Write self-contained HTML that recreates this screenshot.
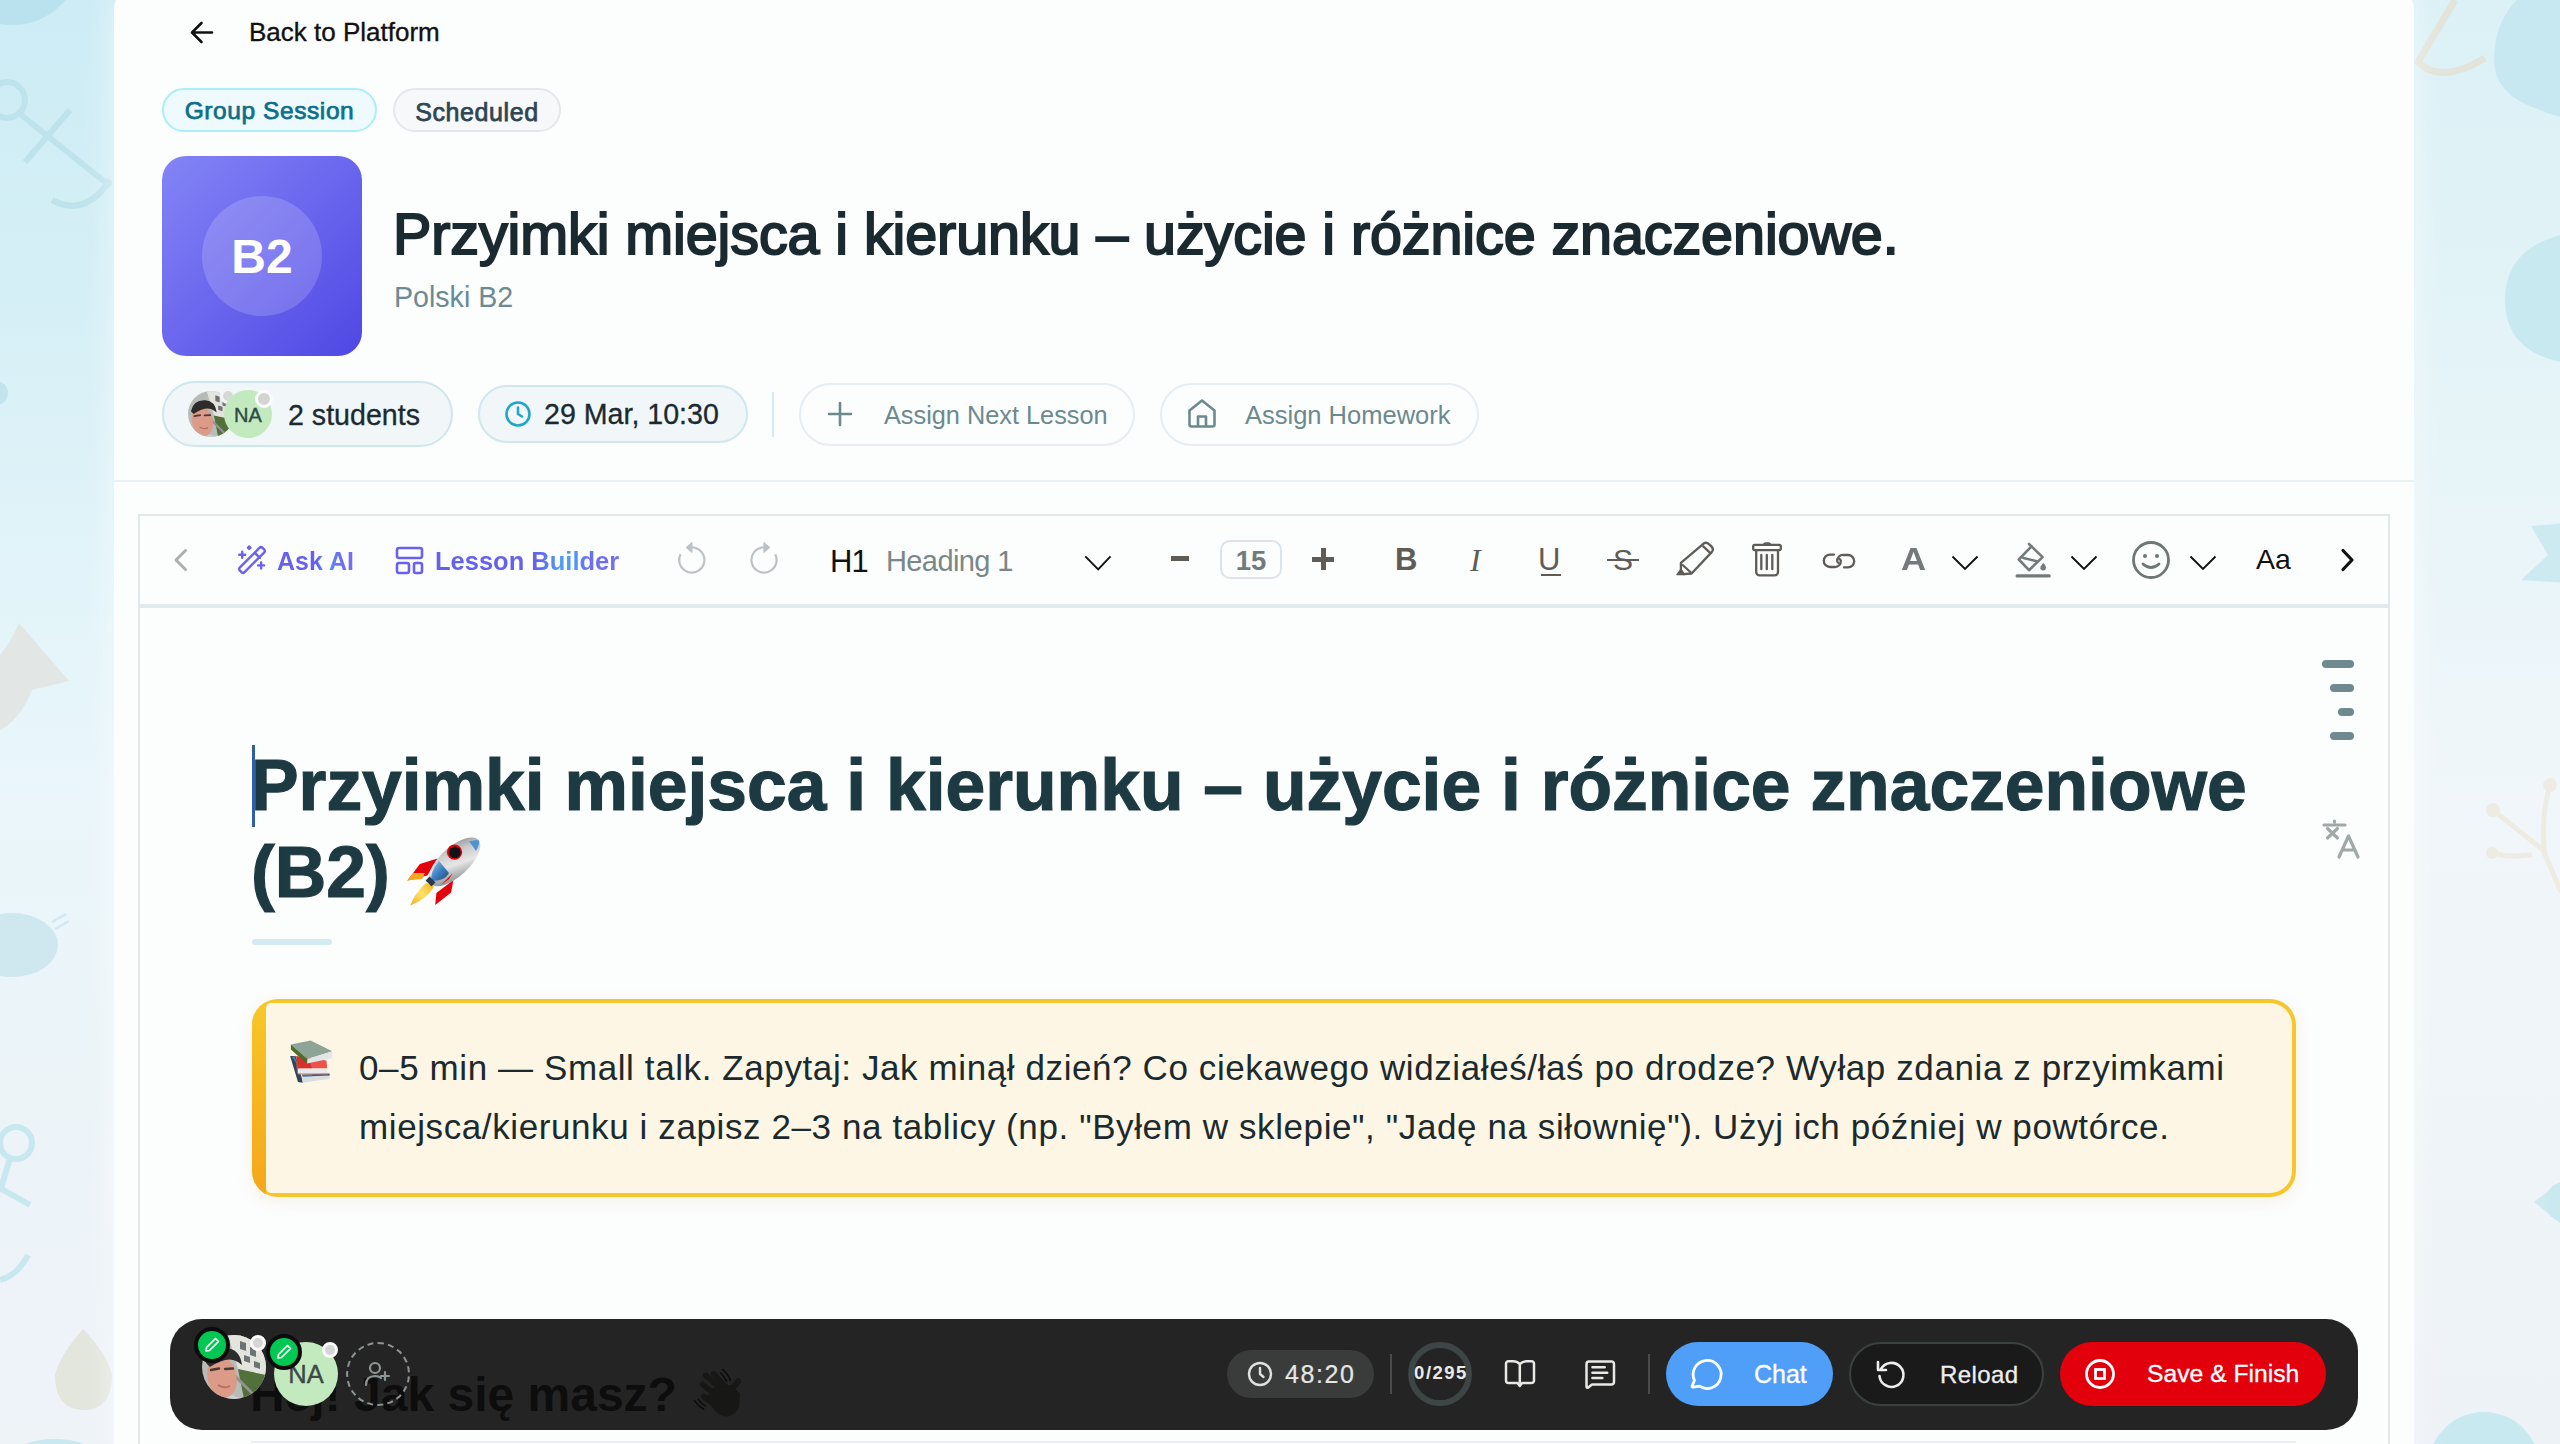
<!DOCTYPE html>
<html><head><meta charset="utf-8">
<style>
*{box-sizing:border-box;margin:0;padding:0}
html,body{width:2560px;height:1444px;overflow:hidden}
body{position:relative;font-family:"Liberation Sans",sans-serif;background:linear-gradient(180deg,#cdecf5 0%,#d5eff6 20%,#e2f4f9 40%,#eaf6fb 55%,#ecf4f8 75%,#eef3f8 100%)}
.a{position:absolute}
.t{position:absolute;line-height:1;white-space:nowrap;font-family:"Liberation Sans",sans-serif}
svg{position:absolute;overflow:visible}
#panel{position:absolute;left:114px;top:-8px;width:2300px;height:1472px;background:#fcfdfd;border-radius:16px;box-shadow:0 0 30px 4px rgba(255,255,255,.45)}
.pill{position:absolute;border-style:solid;border-width:2px}
</style></head>
<body>
<!-- background decorations -->
<div class="a" style="left:2300px;top:0;width:260px;height:1444px;background:linear-gradient(180deg,#dbf1f6 0%,#e2f3f7 20%,#eaf5f9 40%,#f0f6fa 55%,#eef4f8 80%,#edf2f7 100%)"></div>
<svg class="a" style="left:0;top:0" width="2560" height="1444" viewBox="0 0 2560 1444">
 <circle cx="12" cy="-45" r="70" fill="#b9e2ee"/>
 <circle cx="-4" cy="393" r="12" fill="#c2e4ee"/>
 <g fill="none" stroke="#bfe3ec" stroke-width="6" stroke-linecap="butt">
  <circle cx="7" cy="100" r="18"/>
  <path d="M20 114L110 186"/><path d="M25 162L70 110"/><path d="M52 200Q85 218 110 180"/>
 </g>
 <path d="M19 623L69 681L32 690Q20 720 0 730L0 655Q12 640 19 623Z" fill="#e2e7e5"/>
 <ellipse cx="12" cy="945" rx="46" ry="32" fill="#cfe8ef"/>
 <path d="M52 922L66 914M55 929L69 921" stroke="#cfeaf0" stroke-width="2.5"/>
 <g fill="none" stroke="#c8e8f0" stroke-width="6">
  <circle cx="16" cy="1143" r="16"/>
  <path d="M10 1158L0 1192"/><path d="M0 1188L30 1205"/><path d="M28 1255Q18 1275 0 1280"/>
 </g>
 <path d="M83 1329Q60 1355 55 1375Q55 1410 84 1410Q112 1410 112 1375Q108 1355 83 1329Z" fill="#e3e6dd"/>
 <ellipse cx="55" cy="1455" rx="40" ry="16" fill="#c9e8f0"/>
 <path d="M2494 60Q2494 5 2545 -20L2600 -10L2600 110Q2570 125 2540 110Q2494 95 2494 60Z" fill="#c7e8f0"/>
 <path d="M2455 0L2418 62Q2440 85 2485 58" fill="none" stroke="#e2e4d9" stroke-width="7"/>
 <path d="M2505 300Q2505 250 2560 235L2600 240L2600 360L2560 362Q2505 350 2505 300Z" fill="#c9e9f0"/>
 <path d="M2531 526L2600 520L2600 585L2521 580L2548 555Z" fill="#cdeaf1"/>
 <g fill="none" stroke="#eeece2" stroke-width="5" stroke-linecap="round">
  <path d="M2493 810L2543 850Q2552 870 2560 890"/><path d="M2550 785Q2540 820 2545 855"/><path d="M2492 853Q2510 858 2530 855"/>
 </g>
 <circle cx="2493" cy="810" r="7" fill="#eeece2"/><circle cx="2550" cy="785" r="7" fill="#eeece2"/><circle cx="2492" cy="853" r="6" fill="#eeece2"/>
 <path d="M2534 1202L2560 1182L2560 1223Z" fill="#cdeaf1"/><circle cx="2565" cy="1202" r="20" fill="#c9e8f0"/>
 <circle cx="2484" cy="1468" r="56" fill="#c9e9f1"/>
</svg>

<svg width="0" height="0" style="position:absolute"><defs>
<clipPath id="pc"><circle cx="32" cy="32" r="32"/></clipPath>
<symbol id="photo" viewBox="0 0 64 64"><g clip-path="url(#pc)">
 <rect width="64" height="64" fill="#b8bcb8"/>
 <path d="M26 0H64V44L36 34Z" fill="#e4e4de"/>
 <path d="M38 6L44 8V16L38 14ZM48 12L54 14V22L48 20ZM42 20L48 22V28L42 26ZM52 26L58 28V34L52 32Z" fill="#6d7274"/>
 <path d="M36 34L64 40V64H42Z" fill="#52703a"/>
 <path d="M32 40L54 62" stroke="#909490" stroke-width="3"/>
 <path d="M0 44L10 64H0Z" fill="#dde0e0"/>
 <ellipse cx="20" cy="42" rx="14.5" ry="21" transform="rotate(-12 20 42)" fill="#dc9a88"/>
 <path d="M4 28Q8 12 24 13Q38 14 40 30L36 27Q26 20 8 32Z" fill="#2e2c2b"/>
 <path d="M9 35L17 33.5M23 34L31 33.5" stroke="#4a3a36" stroke-width="2.4" stroke-linecap="round"/>
 <path d="M16 50Q22 54 28 51" stroke="#b86e5e" stroke-width="1.8" fill="none"/>
 <path d="M30 60L40 64H22Z" fill="#cdd0cc"/>
</g></symbol></defs></svg>
<div id="panel"></div>

<!-- HEADER -->
<svg style="left:189px;top:20px" width="26" height="25" viewBox="0 0 26 25"><path d="M23 12.5H3.5M12.5 3L3 12.5L12.5 22" fill="none" stroke="#111" stroke-width="2.6" stroke-linecap="round" stroke-linejoin="round"/></svg>
<div class="t" style="left:249px;top:19px;font-size:26px;color:#111;-webkit-text-stroke:.35px #111">Back to Platform</div>

<div class="pill" style="left:162px;top:88px;width:215px;height:44px;border-radius:22px;border-color:#a9eefa;background:#eefafd"></div>
<div class="t" style="left:162px;width:215px;text-align:center;top:98.5px;font-size:24.5px;font-weight:400;letter-spacing:.58px;-webkit-text-stroke:.75px #0c6f8a;color:#0c6f8a">Group Session</div>
<div class="pill" style="left:393px;top:88px;width:168px;height:44px;border-radius:22px;border-color:#e2e8eb;background:#f6f8fa"></div>
<div class="t" style="left:393px;width:168px;text-align:center;top:99.5px;font-size:25px;font-weight:400;letter-spacing:.6px;-webkit-text-stroke:.75px #2f4552;color:#2f4552">Scheduled</div>

<div class="a" style="left:162px;top:156px;width:200px;height:200px;border-radius:24px;background:linear-gradient(135deg,#8485f6 0%,#6a66ee 50%,#4f47e4 100%)"></div>
<div class="a" style="left:202px;top:196px;width:120px;height:120px;border-radius:60px;background:rgba(255,255,255,.17)"></div>
<div class="t" style="left:162px;width:200px;text-align:center;top:233px;font-size:48px;font-weight:700;color:#fff">B2</div>

<div class="t" style="left:393px;top:206px;font-size:57.5px;font-weight:400;letter-spacing:-0.1px;color:#1b2a30;-webkit-text-stroke:2px #1b2a30">Przyimki miejsca i kierunku – użycie i różnice znaczeniowe.</div>
<div class="t" style="left:394px;top:283px;font-size:28.6px;color:#6a8b91">Polski B2</div>

<!-- students pill -->
<div class="pill" style="left:162px;top:381px;width:291px;height:66px;border-radius:33px;border-color:#cde7ef;background:#f1f6f9"></div>
<svg style="left:188px;top:391px" width="46" height="46" viewBox="0 0 64 64"><use href="#photo"/></svg>
<div class="a" style="left:220px;top:388px;width:16px;height:16px;border-radius:8px;background:#d6d8d8;border:3px solid #f4f6f6"></div>
<div class="a" style="left:224px;top:390px;width:48px;height:48px;border-radius:24px;background:#c3e9bf"></div>
<div class="t" style="left:224px;width:48px;text-align:center;top:405px;font-size:20px;color:#2d4a48;-webkit-text-stroke:.4px #2d4a48">NA</div>
<div class="a" style="left:255px;top:390px;width:18px;height:18px;border-radius:9px;background:#d3d5d5;border:3px solid #fbfcfc"></div>
<div class="t" style="left:288px;top:401px;font-size:28.6px;color:#1b2a30;-webkit-text-stroke:.3px #1b2a30">2 students</div>

<div class="pill" style="left:478px;top:385px;width:270px;height:58px;border-radius:29px;border-color:#cfe7ef;background:#f1f6f9"></div>
<svg style="left:504px;top:400px" width="28" height="28" viewBox="0 0 28 28"><circle cx="14" cy="14" r="11.5" fill="none" stroke="#21a6c8" stroke-width="2.6"/><path d="M14 7.5V14L18 16.5" fill="none" stroke="#21a6c8" stroke-width="2.6" stroke-linecap="round" stroke-linejoin="round"/></svg>
<div class="t" style="left:544px;top:400px;font-size:28.6px;color:#1b2a30;-webkit-text-stroke:.3px #1b2a30">29 Mar, 10:30</div>
<div class="a" style="left:772px;top:392px;width:2px;height:45px;background:#d6ebf1"></div>

<div class="pill" style="left:799px;top:383px;width:336px;height:63px;border-radius:32px;border-color:#e5eef2;background:#fcfdfd"></div>
<svg style="left:826px;top:400px" width="28" height="28" viewBox="0 0 28 28"><path d="M14 3V25M3 14H25" fill="none" stroke="#6b8a8f" stroke-width="2.6" stroke-linecap="round"/></svg>
<div class="t" style="left:884px;top:403px;font-size:25.3px;color:#6b8a8f">Assign Next Lesson</div>
<div class="pill" style="left:1160px;top:383px;width:319px;height:63px;border-radius:32px;border-color:#e5eef2;background:#fcfdfd"></div>
<svg style="left:1186px;top:398px" width="32" height="31" viewBox="0 0 32 31"><path d="M3.5 12.5L16 2.5L28.5 12.5V26.5A2 2 0 0 1 26.5 28.5H5.5A2 2 0 0 1 3.5 26.5Z M12 28.5V18.5H20V28.5" fill="none" stroke="#6b8a8f" stroke-width="2.6" stroke-linejoin="round"/></svg>
<div class="t" style="left:1245px;top:403px;font-size:25.5px;color:#6b8a8f">Assign Homework</div>

<div class="a" style="left:114px;top:480px;width:2300px;height:2px;background:#e7f2f5"></div>

<!-- EDITOR -->
<div class="a" id="editor" style="left:138px;top:514px;width:2252px;height:960px;border:2px solid #e1e9eb;background:#fcfdfd"></div>
<div class="a" style="left:140px;top:604px;width:2248px;height:4px;background:#e3eaec"></div>


<!-- TOOLBAR -->
<svg style="left:170px;top:546px" width="22" height="28" viewBox="0 0 22 28"><path d="M15.5 4.5L6 14L15.5 23.5" fill="none" stroke="#a9b0ae" stroke-width="3" stroke-linecap="round" stroke-linejoin="round"/></svg>
<svg style="left:235px;top:544px" width="34" height="32" viewBox="0 0 34 32"><g fill="none" stroke="#6a62ee" stroke-width="2.4" stroke-linejoin="round" stroke-linecap="round"><rect x="-16" y="-3.3" width="32" height="6.6" rx="2.2" transform="translate(17,16) rotate(-45)"/><path d="M20.2 9.2L24.8 13.8"/><path d="M7.2 7.7V13.7M4.2 10.7H10.2M26.1 18.4V24.4M23.1 21.4H29.1"/></g><rect x="12.2" y="1.7" width="4" height="4" rx="1" transform="rotate(45 14.2 3.7)" fill="#6a62ee"/></svg>
<div class="t" style="left:277px;top:549px;font-size:25px;font-weight:700;background:linear-gradient(90deg,#6660ee 0%,#6560ee 52%,#4f9cf5 62%,#6e6cf0 82%,#7472f0 100%);-webkit-background-clip:text;color:transparent">Ask AI</div>
<svg style="left:394px;top:545px" width="31" height="31" viewBox="0 0 31 31"><rect x="3" y="3" width="25" height="10" rx="2" fill="none" stroke="#6a62ee" stroke-width="2.6"/><rect x="3" y="18" width="12" height="10" rx="2" fill="none" stroke="#6a62ee" stroke-width="2.6"/><rect x="20" y="18" width="8" height="10" rx="2" fill="none" stroke="#6a62ee" stroke-width="2.6"/></svg>
<div class="t" style="left:435px;top:549px;font-size:25.5px;font-weight:700;background:linear-gradient(90deg,#6660ee 0%,#6461ee 55%,#4f9cf5 68%,#4f9cf5 75%,#6a6ef0 83%,#7472f0 100%);-webkit-background-clip:text;color:transparent">Lesson Builder</div>
<svg style="left:676px;top:540px" width="32" height="36" viewBox="0 0 32 36"><path d="M4.6 14.2A12.6 12.6 0 1 0 16.2 7.4" fill="none" stroke="#bcc3c6" stroke-width="2.2"/><path d="M10 7.5L16 2.5V12.5Z" fill="#bcc3c6" stroke="#bcc3c6" stroke-width="1" stroke-linejoin="round"/></svg>
<svg style="left:748px;top:540px" width="32" height="36" viewBox="0 0 32 36"><path d="M27.2 14.2A12.6 12.6 0 1 1 15.6 7.4" fill="none" stroke="#bcc3c6" stroke-width="2.2"/><path d="M21.9 7.5L15.9 2.5V12.5Z" fill="#bcc3c6" stroke="#bcc3c6" stroke-width="1" stroke-linejoin="round"/></svg>
<div class="t" style="left:830px;top:546px;font-size:31px;color:#111;letter-spacing:-1px">H1</div>
<div class="t" style="left:886px;top:547px;font-size:29px;color:#7a8788;letter-spacing:-.6px">Heading 1</div>
<svg style="left:1082px;top:552px" width="32" height="22" viewBox="0 0 32 22"><path d="M3.3 4.3L16.2 17.4L28.5 4.3" fill="none" stroke="#111" stroke-width="1.9"/></svg>
<div class="a" style="left:1171px;top:556px;width:18px;height:5px;background:#5f5c58"></div>
<div class="a" style="left:1220px;top:540px;width:62px;height:39px;border:2px solid #dbe5e9;border-radius:10px"></div>
<div class="t" style="left:1220px;width:62px;text-align:center;top:546.5px;font-size:27.5px;font-weight:700;color:#6f7c7c">15</div>
<div class="a" style="left:1312px;top:557px;width:22px;height:4.5px;background:#5f5c58"></div>
<div class="a" style="left:1320.5px;top:548px;width:5px;height:21.5px;background:#5f5c58"></div>
<div class="t" style="left:1395px;top:544px;font-size:31px;font-weight:700;color:#5f5c58">B</div>
<div class="t" style="left:1470px;top:544px;font-size:32px;font-family:'Liberation Serif',serif;font-style:italic;color:#5f5c58">I</div>
<div class="t" style="left:1538px;top:544px;font-size:31px;color:#5f5c58">U</div>
<div class="a" style="left:1540.5px;top:573.5px;width:20.5px;height:2.2px;background:#5f5c58"></div>
<div class="t" style="left:1613px;top:545px;font-size:30px;color:#5f5c58">S</div>
<div class="a" style="left:1607px;top:558.5px;width:32px;height:2.2px;background:#5f5c58"></div>
<svg style="left:1674px;top:540px" width="42" height="38" viewBox="0 0 42 38"><g fill="none" stroke="#5f5c58" stroke-width="2.3" stroke-linejoin="round"><path d="M6.9 22.8L29.3 3.8Q32.3 1.6 35.2 4.3L37.4 6.4Q40.2 9.3 37.7 12.1L17.6 33.5L9.8 34.2L6.9 30.5Z"/><path d="M28.7 5.8L36.4 13.2"/><path d="M8.1 24.5L17.4 33"/></g><path d="M6.9 29.5L3 34.6L10.5 34.6Z" fill="#5f5c58" stroke="#5f5c58" stroke-width="1.5" stroke-linejoin="round"/></svg>
<svg style="left:1750px;top:540px" width="34" height="38" viewBox="0 0 34 38"><g fill="none" stroke="#5f5c58" stroke-width="2.3" stroke-linejoin="round" stroke-linecap="round"><rect x="3.2" y="4.8" width="27.6" height="5.4" rx="1.6"/><path d="M6.2 10.5V32A3.4 3.4 0 0 0 9.6 35.4H24.6A3.4 3.4 0 0 0 28 32V10.5"/><path d="M11.3 14.8V29.2M16.8 14.8V29.2M22.3 14.8V29.2"/></g><path d="M12.8 4.6Q13.6 2.2 15.5 2.2H18.7Q20.6 2.2 21.4 4.6Z" fill="#5f5c58"/></svg>
<svg style="left:1821px;top:551px" width="36" height="20" viewBox="0 0 36 20"><g fill="none" stroke="#5f5c58" stroke-width="2.3" stroke-linecap="round"><path d="M13 3.6H9A6.2 6.2 0 0 0 9 16H13.5A5.8 5.8 0 0 0 19.8 9.6Q19.6 8.4 18.4 8.2"/><path d="M23 16.4H27A6.2 6.2 0 0 0 27 4H22.5A5.8 5.8 0 0 0 16.2 10.4Q16.4 11.6 17.6 11.8"/></g></svg>
<div class="t" style="left:1901px;top:544px;font-size:31px;font-weight:700;color:#737a7a;transform:scaleX(1.12);transform-origin:left top">A</div>
<svg style="left:1950px;top:553px" width="30" height="20" viewBox="0 0 30 20"><path d="M2.5 3.5L15 16L27.5 3.5" fill="none" stroke="#111" stroke-width="1.9"/></svg>
<svg style="left:2013px;top:541px" width="40" height="38" viewBox="0 0 40 38"><g fill="none" stroke="#737a7a" stroke-width="2.6" stroke-linejoin="round" stroke-linecap="round"><path d="M5.8 18.5L18.5 5.4L29.6 16.1L16 29.2Z"/><path d="M16 3L18.5 5.4"/><path d="M10.3 16.9L23.8 20.2"/></g><path d="M30.2 21.8Q34 25.8 32.6 28.2Q31 30.4 28.6 29Q26.6 27.6 27.6 25.4Z" fill="#737a7a"/><rect x="2.5" y="33.2" width="35.3" height="3.4" rx="1.7" fill="#737a7a"/></svg>
<svg style="left:2069px;top:553px" width="30" height="20" viewBox="0 0 30 20"><path d="M2.5 3.5L15 16L27.5 3.5" fill="none" stroke="#111" stroke-width="1.9"/></svg>
<svg style="left:2130px;top:539px" width="42" height="42" viewBox="0 0 42 42"><circle cx="21" cy="21" r="17.5" fill="none" stroke="#6e7676" stroke-width="2.8"/><circle cx="15" cy="17" r="2" fill="#6e7676"/><circle cx="27" cy="17" r="2" fill="#6e7676"/><path d="M13 25Q21 32 29 25" fill="none" stroke="#6e7676" stroke-width="2.8" stroke-linecap="round"/></svg>
<svg style="left:2188px;top:553px" width="30" height="20" viewBox="0 0 30 20"><path d="M2.5 3.5L15 16L27.5 3.5" fill="none" stroke="#111" stroke-width="1.9"/></svg>
<div class="t" style="left:2256px;top:545px;font-size:28.5px;color:#111">Aa</div>
<svg style="left:2337px;top:547px" width="22" height="26" viewBox="0 0 22 26"><path d="M6 3.5L15 13L6 22.5" fill="none" stroke="#111" stroke-width="3.2" stroke-linecap="round" stroke-linejoin="round"/></svg>


<!-- EDITOR BODY -->
<div class="a" style="left:252px;top:745px;width:2.5px;height:82px;background:#2f5fa6"></div>
<div class="t" style="left:251px;top:750px;font-size:71.4px;font-weight:700;color:#1d3a42;line-height:1;-webkit-text-stroke:1.2px #1d3a42">Przyimki miejsca i kierunku – użycie i różnice znaczeniowe</div>
<div class="t" style="left:251px;top:837px;font-size:71.4px;font-weight:700;color:#1d3a42;line-height:1;-webkit-text-stroke:1.2px #1d3a42">(B2)</div>
<svg style="left:405px;top:835px" width="76" height="74" viewBox="0 0 76 74">
 <defs>
  <linearGradient id="rb" x1="0" y1="1" x2="1" y2="0"><stop offset="0" stop-color="#6c6f72"/><stop offset=".45" stop-color="#e6e6e6"/><stop offset=".7" stop-color="#c9c9c9"/><stop offset="1" stop-color="#7b7e80"/></linearGradient>
  <linearGradient id="fl" x1="1" y1="0" x2="0" y2="1"><stop offset="0" stop-color="#f7b21a"/><stop offset=".5" stop-color="#fde36a"/><stop offset="1" stop-color="#f5a81c"/></linearGradient>
  <linearGradient id="bl" x1="0" y1="0" x2="1" y2="1"><stop offset="0" stop-color="#9ccbe9"/><stop offset=".5" stop-color="#3b7fc4"/><stop offset="1" stop-color="#2a4a66"/></linearGradient>
 </defs>
 <path d="M2.4 45.6L14.9 29.1L32.5 23.4L22.3 40.5Z" fill="#e3000b"/>
 <path d="M2.4 45.6L8 38L20 38L17 44Z" fill="#f5a81c"/>
 <path d="M30.2 70L31.4 58L48.4 45L46.1 57.5Z" fill="#e3000b"/>
 <path d="M5.2 70.6Q10 58 21.1 47.8L29 51.8Q22 64 5.2 70.6Z" fill="url(#fl)"/>
 <ellipse cx="49.5" cy="26.8" rx="32.5" ry="14.5" transform="rotate(-42.5 49.5 26.8)" fill="url(#rb)"/>
 <path d="M27 46Q24 38 34 26L44 38Q40 46 27 46Z" fill="url(#bl)"/>
 <path d="M64 6.5Q72 4 73.8 5.5Q75 9 71 16Q67 10 64 6.5Z" fill="#4a95d6"/>
 <circle cx="49.5" cy="17.2" r="7.6" fill="#e3000b"/><circle cx="49.8" cy="17.4" r="5.9" fill="#111417"/>
 <path d="M20.6 45.5L24.6 41.5L30.5 47.5L26.5 51.5Z" fill="#2a3a48"/>
 <path d="M36 50L48 38L44 44Z" fill="#e3000b"/>
</svg>
<div class="a" style="left:252px;top:939px;width:80px;height:6px;border-radius:3px;background:#d2eaf1"></div>

<!-- TOC lines -->
<div class="a" style="left:2322px;top:660px;width:32px;height:8px;border-radius:4px;background:#6e8a90"></div>
<div class="a" style="left:2330px;top:684px;width:24px;height:8px;border-radius:4px;background:#6e8a90"></div>
<div class="a" style="left:2338px;top:708px;width:16px;height:8px;border-radius:4px;background:#6e8a90"></div>
<div class="a" style="left:2330px;top:732px;width:24px;height:8px;border-radius:4px;background:#6e8a90"></div>
<svg style="left:2321px;top:818px" width="42" height="42" viewBox="0 0 42 42"><path d="M3 7H24 M13.5 3V4 M6.5 10.5L16.5 20 M16.5 10.5L6.5 20" fill="none" stroke="#a0a8a8" stroke-width="3.2" stroke-linecap="round"/><path d="M13 40L22.5 19L32 40 M16 33H29" fill="none" stroke="#a0a8a8" stroke-width="3.2" stroke-linecap="round" stroke-linejoin="round" transform="translate(5,-1)"/></svg>

<!-- CALLOUT -->
<div class="a" style="left:252px;top:999px;width:2044px;height:198px;border-radius:26px;background:#f7c62a;box-shadow:0 4px 16px rgba(200,170,90,.14);overflow:hidden"><div class="a" style="left:0;top:0;width:14px;height:100%;background:linear-gradient(180deg,#f8c72a 0%,#f6b820 45%,#f5a61c 100%)"></div><div class="a" style="left:14px;top:4px;right:4px;bottom:4px;border-radius:5px 22px 22px 5px;background:#fdf6e5"></div></div>
<svg style="left:288px;top:1038px" width="48" height="48" viewBox="0 0 48 48">
 <path d="M2.1 18L8 18.3L15 44.7L10 44Z" fill="#2e4658"/>
 <path d="M4 19L7 19L9 26Z" fill="#3a80c8"/>
 <path d="M14 36.5L41.6 36.5L41.6 40.8L14.7 44.7Z" fill="#d8dde0"/>
 <path d="M14 36.5L41.6 35.5L41.6 37.5L14.5 38.5Z" fill="#34556e"/>
 <path d="M15 37.2L24 37L24 38.2L15.3 38.4Z" fill="#3a80c8"/>
 <path d="M8.4 17.9L38.4 22.6L39.2 30.5L10 30.5Z" fill="#f0504a"/>
 <path d="M8.4 17.9L22 24L24 30.5L10 30.5Z" fill="#d8312c"/>
 <path d="M10 30.5L39.2 30.5L39.6 35.7L10 35.7Z" fill="#e6eaea"/>
 <path d="M10 35.5L39.6 35.2L39.6 36.5L10.2 36.5Z" fill="#d98070"/>
 <path d="M8 18.3L10 30.5L10 35.7L9 35Z" fill="#c9605a"/>
 <path d="M2.9 6.4L22.6 2.5L44.3 13.2L19.5 21.1Z" fill="#8ea496"/>
 <path d="M2.9 6.4L19.5 21.1L18.7 25.8L2.9 11.6Z" fill="#4e6e2e"/>
 <path d="M19.5 21.1L44.3 13.2L44 20.3L19.1 25.4Z" fill="#e2e6e6"/>
</svg>
<div class="t" style="left:359px;top:1050px;font-size:35px;letter-spacing:.6px;color:#1b2a2e">0–5 min — Small talk. Zapytaj: Jak minął dzień? Co ciekawego widziałeś/łaś po drodze? Wyłap zdania z przyimkami</div>
<div class="t" style="left:359px;top:1109px;font-size:35px;letter-spacing:.6px;color:#1b2a2e">miejsca/kierunku i zapisz 2–3 na tablicy (np. "Byłem w sklepie", "Jadę na siłownię"). Użyj ich później w powtórce.</div>
<div class="a" style="left:251px;top:1441px;width:2045px;height:2px;background:#e8eef2"></div>

<!-- BOTTOM BAR -->
<div class="a" style="left:170px;top:1319px;width:2188px;height:111px;border-radius:32px;background:#242424"></div>
<div class="t" style="left:250px;top:1371px;font-size:48px;font-weight:700;color:#0d0d0d">Hej! Jak się masz?</div>
<svg style="left:690px;top:1366px" width="56" height="54" viewBox="0 0 56 54"><g stroke="#171715" stroke-linecap="round" fill="none"><path d="M15.8 9.4L30.9 22.8M23.6 7.8L36.5 21.7M12.6 18.3L28.2 31.1M13.7 30.5L25.4 39.4" stroke-width="5.6"/><path d="M48.2 15.2L42 23" stroke-width="6"/><path d="M32.6 3.4Q38 8 40.4 14.5M30.4 6.7Q34 10 36.5 15M4.3 34.4Q8 40 13.8 43.3M8.2 33.3Q11 37.5 15.4 40" stroke-width="1.4" stroke="#0a0a0a"/></g><path d="M22 22L42 19L50 28L49 42Q44 50 36.5 50.5Q30 50 24 44L16 33Z" fill="#171715"/></svg>

<svg style="left:202px;top:1335px" width="64" height="64" viewBox="0 0 64 64"><use href="#photo"/></svg>
<div class="a" style="left:250px;top:1335px;width:16px;height:16px;border-radius:8px;background:#d5d5d5;border:3.5px solid #fafafa"></div>
<div class="a" style="left:194px;top:1327px;width:36px;height:36px;border-radius:18px;background:#00c853;border:4px solid #0c0c0c"></div>
<svg style="left:203px;top:1336px" width="18" height="18" viewBox="0 0 18 18"><path d="M12.5 2.5L15.5 5.5L6.5 14.5L3 15L3.5 11.5Z" fill="none" stroke="#fff" stroke-width="1.7" stroke-linejoin="round"/></svg>
<div class="a" style="left:274px;top:1342px;width:64px;height:64px;border-radius:32px;background:#c3eabf"></div>
<div class="t" style="left:274px;width:64px;text-align:center;top:1362px;font-size:25.5px;color:#3e4848;-webkit-text-stroke:.4px #3e4848">NA</div>
<div class="a" style="left:322px;top:1342px;width:16px;height:16px;border-radius:8px;background:#d5d5d5;border:3.5px solid #fafafa"></div>
<div class="a" style="left:266px;top:1334px;width:36px;height:36px;border-radius:18px;background:#00c853;border:4px solid #0c0c0c"></div>
<svg style="left:275px;top:1343px" width="18" height="18" viewBox="0 0 18 18"><path d="M12.5 2.5L15.5 5.5L6.5 14.5L3 15L3.5 11.5Z" fill="none" stroke="#fff" stroke-width="1.7" stroke-linejoin="round"/></svg>
<div class="a" style="left:346px;top:1342px;width:64px;height:64px;border-radius:32px;border:2px dashed #8d9494"></div>
<svg style="left:362px;top:1358px" width="32" height="32" viewBox="0 0 32 32"><circle cx="13" cy="10" r="5" fill="none" stroke="#8d9494" stroke-width="2.2"/><path d="M4 27Q4 18 13 18Q17 18 19 20 M23 14V22 M19 18H27" fill="none" stroke="#8d9494" stroke-width="2.2" stroke-linecap="round"/></svg>

<div class="a" style="left:1227px;top:1350px;width:147px;height:48px;border-radius:24px;background:#3a3c3c"></div>
<svg style="left:1246px;top:1360px" width="28" height="28" viewBox="0 0 28 28"><circle cx="14" cy="14" r="11" fill="none" stroke="#e0e0e0" stroke-width="2.4"/><path d="M14 8V14L17.5 17" fill="none" stroke="#e0e0e0" stroke-width="2.4" stroke-linecap="round" stroke-linejoin="round"/></svg>
<div class="t" style="left:1285px;top:1361.5px;font-size:25px;color:#e6e6e4;letter-spacing:1.6px;-webkit-text-stroke:.2px #e6e6e4">48:20</div>
<div class="a" style="left:1390px;top:1354px;width:2px;height:40px;background:#4a4c4c"></div>
<svg style="left:1406px;top:1340px" width="68" height="68" viewBox="0 0 68 68"><circle cx="34" cy="34" r="29" fill="none" stroke="#3d4545" stroke-width="6"/></svg>
<div class="t" style="left:1407px;width:68px;text-align:center;top:1364px;font-size:18.5px;font-weight:700;letter-spacing:1.5px;color:#eaeae6">0/295</div>
<svg style="left:1503px;top:1358px" width="34" height="34" viewBox="0 0 34 34"><path d="M16.8 6Q14 3.2 10 3.2H5.5A2.5 2.5 0 0 0 3 5.7V22.5A2.5 2.5 0 0 0 5.5 25H14.5L16.8 28L19.1 25H28.5A2.5 2.5 0 0 0 31 22.5V5.7A2.5 2.5 0 0 0 28.5 3.2H23.6Q19.6 3.2 16.8 6ZM16.8 6V25.5" fill="none" stroke="#e8e8e4" stroke-width="2.5" stroke-linejoin="round"/></svg>
<svg style="left:1583px;top:1358px" width="34" height="34" viewBox="0 0 34 34"><path d="M6 3.5H28.5A2.5 2.5 0 0 1 31 6V24A2.5 2.5 0 0 1 28.5 26.5H9L5.2 29.5Q3.5 30.2 3.5 28.5V6A2.5 2.5 0 0 1 6 3.5Z" fill="none" stroke="#e8e8e4" stroke-width="2.5" stroke-linejoin="round"/><path d="M9.5 9.3H21.7M9.5 14.7H24.2M9.5 20H19.3" stroke="#e8e8e4" stroke-width="2.6" stroke-linecap="round"/></svg>
<div class="a" style="left:1648px;top:1354px;width:2px;height:40px;background:#4a4c4c"></div>

<div class="a" style="left:1666px;top:1342px;width:167px;height:64px;border-radius:32px;background:#4f9ff8"></div>
<svg style="left:1688px;top:1357px" width="36" height="34" viewBox="0 0 36 34"><path d="M6.5 23.5A14 14 0 1 1 11.5 29.2L5.2 30.2Q3.6 30.2 4.2 28.6Z" fill="none" stroke="#fff" stroke-width="2.8" stroke-linejoin="round"/></svg>
<div class="t" style="left:1754px;top:1362px;font-size:25px;color:#fff;-webkit-text-stroke:.3px #fff">Chat</div>

<div class="a" style="left:1849px;top:1342px;width:195px;height:64px;border-radius:32px;background:#1a1a1a;border:2px solid #3b4040"></div>
<svg style="left:1873px;top:1357px" width="34" height="34" viewBox="0 0 34 34"><path d="M8 12A12 12 0 1 1 6.5 19" fill="none" stroke="#eee" stroke-width="2.6" stroke-linecap="round"/><path d="M5 5V13H13" fill="none" stroke="#eee" stroke-width="2.6" stroke-linecap="round" stroke-linejoin="round" transform="translate(0,0)"/></svg>
<div class="t" style="left:1940px;top:1363px;font-size:24px;letter-spacing:.4px;color:#eee;-webkit-text-stroke:.3px #eee">Reload</div>

<div class="a" style="left:2060px;top:1342px;width:266px;height:64px;border-radius:32px;background:#e2000d"></div>
<svg style="left:2082px;top:1356px" width="36" height="36" viewBox="0 0 36 36"><circle cx="18" cy="18" r="13.5" fill="none" stroke="#fff" stroke-width="2.8"/><rect x="13.5" y="13.5" width="9" height="9" fill="none" stroke="#fff" stroke-width="2.8"/></svg>
<div class="t" style="left:2147px;top:1362px;font-size:24.7px;color:#fff;-webkit-text-stroke:.3px #fff">Save &amp; Finish</div>

</body></html>
